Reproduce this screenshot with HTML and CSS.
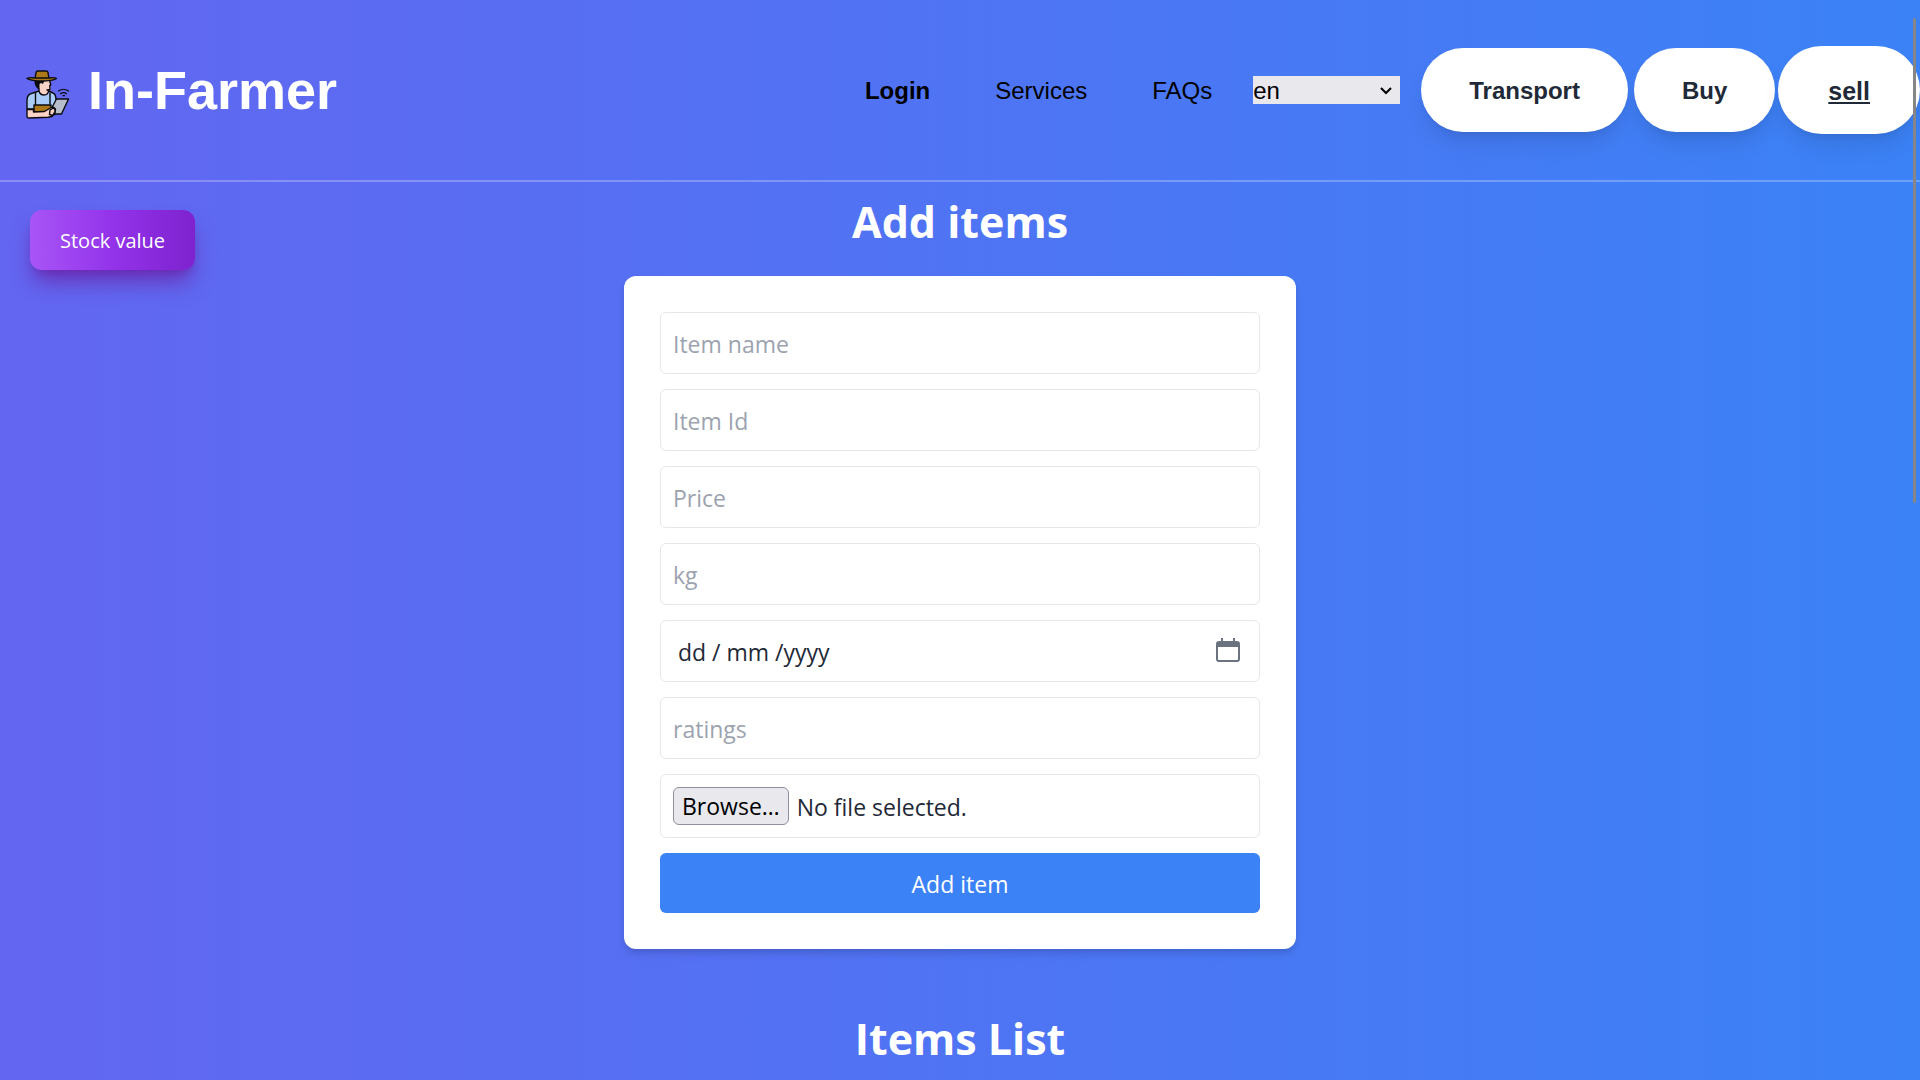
FILE: index.html
```html
<!DOCTYPE html>
<html lang="en">
<head>
<meta charset="utf-8">
<meta name="viewport" content="width=device-width, initial-scale=1">
<title>In-Farmer</title>
<link rel="stylesheet" href="styles.css">
</head>
<body>
<header class="header">
  <a class="brand" href="#">
    <svg class="brand-logo" viewBox="0 0 48 50" aria-hidden="true" stroke="#0b0b10" stroke-width="1.4" stroke-linecap="round" stroke-linejoin="round">
      <path d="M2 40V31q0-6 6-7l6-2 4 3h2l4-3 4 2q3 1 3 7v9z" fill="#a9cdf8"/>
      <path d="M14 18v4q0 4 5 4 4 0 4-3v-1.500l2.500-.500V12H13z" fill="#fbd3c6" stroke="none"/>
      <path d="M14 20v2q1 4 5 4 4 0 4.500-4M22 21l3-.500-.200-4 1-.500-1-4" fill="none"/>
      <path d="M9.500 11q-.500 6 3.500 9h1.500v-5l1.500-1 2 1 1.500-3.500z" fill="#0b0b10" stroke="none"/>
      <path d="M10 10l1-6.500Q11.300 2 13 2h8q1.700 0 2 1.500L24 10z" fill="#ad7818"/>
      <path d="M2 9.500q3-1.500 8-.500h14q5-1 7.500 .500-4 2.500-14.500 2.500T2 9.500z" fill="#ad7818"/>
      <path d="M10.500 24v12M25 24v11" fill="none"/>
      <path d="M9 36h17v7H9z" fill="#ad7818"/>
      <path d="M2 40.500h6.500V43l11-.500 5-3q3-2 5.500-.500v4l-3 4.500-4 .700-19 .800q-2 0-2-2z" fill="#fbd3c6"/>
      <path d="M31.500 30H43.500l-7 15H31l-1.500.500 1-5.500-3-2.500z" fill="#b7bdcb"/>
      <path d="M25 41l3.500-2q2 .500 1.500 4l-2.500 3.500-3-1z" fill="#fbd3c6"/>
      <path d="M33.500 22q5-3.500 10 0M35.500 24.700q3-2 6 0M38 26.700h1.500" fill="none" stroke-width="1.200"/>
    </svg>
    <span class="brand-name">In-Farmer</span>
  </a>
  <nav class="nav">
    <a class="nav-link nav-link-strong" href="#">Login</a>
    <a class="nav-link" href="#">Services</a>
    <a class="nav-link" href="#">FAQs</a>
  </nav>
  <div class="language">
    <select class="language-select" aria-label="Language"><option>en</option></select>
    <svg class="language-arrow" viewBox="0 0 14 10" aria-hidden="true"><path d="M2 2l5 5 5-5" fill="none" stroke="#000" stroke-width="2"/></svg>
  </div>
  <div class="actions">
    <button class="pill" type="button">Transport</button>
    <button class="pill" type="button">Buy</button>
    <button class="pill pill-active" type="button">sell</button>
  </div>
</header>
<main class="main">
  <button class="stock-button" type="button">Stock value</button>
  <section class="add">
    <h1 class="title">Add items</h1>
    <form class="card">
      <input class="field" type="text" placeholder="Item name" aria-label="Item name">
      <input class="field" type="text" placeholder="Item Id" aria-label="Item Id">
      <input class="field" type="text" placeholder="Price" aria-label="Price">
      <input class="field" type="text" placeholder="kg" aria-label="kg">
      <div class="field field-date">
        <input class="date-input" type="text" value="dd / mm /yyyy" aria-label="Date">
        <button class="date-button" type="button" aria-label="Open calendar">
          <svg class="date-icon" viewBox="0 0 24 24" aria-hidden="true"><path fill-rule="evenodd" d="M5 0h2v3h10V0h2v3h2q3 0 3 3v15q0 3-3 3H3q-3 0-3-3V6q0-3 3-3h2zM2 9v12q0 1 1 1h18q1 0 1-1V9z" fill="#6b7280"/></svg>
        </button>
      </div>
      <input class="field" type="text" placeholder="ratings" aria-label="ratings">
      <div class="field field-file">
        <input class="file-input" type="file" id="picture">
        <label class="file-button" for="picture">Browse…</label>
        <span class="file-name">No file selected.</span>
      </div>
      <button class="submit" type="submit">Add item</button>
    </form>
  </section>
  <section class="list">
    <h2 class="title">Items List</h2>
  </section>
</main>
<div class="scroll-thumb" aria-hidden="true"></div>
</body>
</html>
```
FILE: styles.css
```css
*, *::before, *::after { box-sizing: border-box; }

body {
  margin: 0;
  min-height: 100vh;
  overflow: hidden;
  background: linear-gradient(to right, #6366f1, #3b82f6);
  font-family: "Open Sans", "Noto Sans", sans-serif;
  font-size: 23px;
  line-height: 36px;
  color: #1f2937;
}

button, input, select { font: inherit; color: inherit; margin: 0; }
button { border: 0; cursor: pointer; }
a { color: inherit; text-decoration: none; }

.header {
  display: flex;
  align-items: center;
  padding: 46px 0 46px 25px;
  border-bottom: 2px solid rgba(255, 255, 255, 0.25);
  font-family: "Liberation Sans", Arial, sans-serif;
  font-size: 24px;
}
.brand { display: flex; align-items: center; gap: 15px; margin-right: auto; }
.brand-logo { width: 48px; height: 50px; margin-top: 8px; }
.brand-name { font-size: 54px; line-height: 60px; font-weight: 700; color: #fff; }

.nav { display: flex; gap: 65px; padding-top: 2px; margin-right: 41px; color: #000; }
.nav-link-strong { font-weight: 700; }

.language { display: grid; align-items: center; width: 147px; margin-right: 21px; }
.language-select {
  grid-area: 1 / 1;
  width: 100%;
  height: 28px;
  padding: 2px 0 0;
  border: 0;
  border-radius: 0;
  appearance: none;
  background: #e9e9ed;
  color: #000;
  line-height: 26px;
}
.language-arrow { grid-area: 1 / 1; justify-self: end; width: 14px; height: 10px; margin: 2px 7px 0 0; pointer-events: none; }

.actions { display: flex; align-items: center; gap: 6px; }
.pill {
  padding: 25px 48px 23px;
  border-radius: 42px;
  background: #fff;
  font-weight: 700;
  box-shadow: 0 15px 22px -4px rgba(0, 0, 0, 0.1), 0 6px 9px -6px rgba(0, 0, 0, 0.1);
}
.pill-active {
  margin-left: -3px;
  padding: 27px 50px 25px;
  border-radius: 44px;
  font-size: 25px;
  text-decoration: underline;
}

.main { display: grid; grid-template-columns: 1fr 672px 1fr; row-gap: 64px; }
.stock-button {
  justify-self: start;
  align-self: start;
  margin: 28px 30px;
  padding: 13px 30px 11px;
  border-radius: 12px;
  background: linear-gradient(to right, #a855f7, #9333ea, #7e22ce);
  color: #fff;
  font-size: 20px;
  box-shadow: 0 15px 22px -4px rgba(107, 33, 168, 0.8), 0 6px 9px -6px rgba(107, 33, 168, 0.8);
}
.add, .list { grid-column: 2; }
.title { margin: 0; font-size: 43px; line-height: 52px; font-weight: 700; text-align: center; color: #fff; }
.add .title { padding: 14px 0 28px; }

.card {
  display: flex;
  flex-direction: column;
  gap: 15px;
  padding: 36px;
  border-radius: 12px;
  background: #fff;
  box-shadow: 0 6px 9px -1px rgba(0, 0, 0, 0.1), 0 3px 6px -2px rgba(0, 0, 0, 0.1);
}
.field {
  width: 100%;
  padding: 13px 12px 11px;
  border: 1px solid #e5e7eb;
  border-radius: 6px;
  background: #fff;
}
.field::placeholder { color: #9ca3af; opacity: 1; }
.field-date { display: flex; align-items: center; padding: 13px 19px 11px 17px; }
.date-input { flex: 1; min-width: 0; height: 36px; padding: 0; border: 0; background: none; }
.date-button { display: flex; padding: 0; background: none; }
.date-icon { width: 24px; height: 24px; margin-bottom: 4px; }
.field-file { display: flex; align-items: center; gap: 8px; padding: 12px; }
.file-input { position: absolute; width: 1px; height: 1px; opacity: 0; }
.file-button {
  padding: 1px 8px 0;
  border: 1px solid #8f8f9d;
  border-radius: 6px;
  background: #e9e9ed;
  color: #000;
  line-height: 35px;
}
.file-name { padding-top: 2px; }
.submit { padding: 13px 12px 11px; border-radius: 6px; background: #3b82f6; color: #fff; }

.scroll-thumb {
  position: absolute;
  top: 18px;
  right: 4px;
  width: 3px;
  height: 485px;
  border-radius: 2px;
  background: #868686;
}
```
